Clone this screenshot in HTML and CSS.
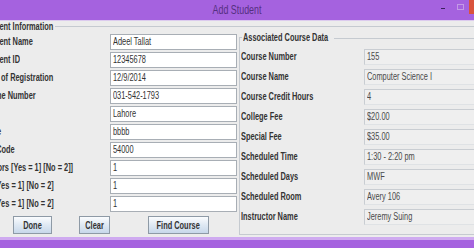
FILE: index.html
```html
<!DOCTYPE html>
<html>
<head>
<meta charset="utf-8">
<link rel="stylesheet" href="styles.css">
</head>
<body>
<div class="window">
  <div class="titlebar">
    <div class="spacer"></div>
    <div class="title"><span class="t">Add Student</span></div>
    <div class="controls"><span class="min"></span><span class="max"></span><span class="close"></span></div>
  </div>
  <div class="content">
    <div class="frame">
      <div class="outer-head"><span class="legend"><span class="t">Student Information</span></span><span class="rule"></span></div>
      <div class="body">
        <div class="left">
          <div class="form">
            <span class="lbl"><span class="t">Student Name</span></span><span class="field"><span class="t">Adeel Tallat</span></span>
            <span class="lbl"><span class="t">Student ID</span></span><span class="field"><span class="t">12345678</span></span>
            <span class="lbl"><span class="t">Date of Registration</span></span><span class="field"><span class="t">12/9/2014</span></span>
            <span class="lbl"><span class="t">Phone Number</span></span><span class="field"><span class="t">031-542-1793</span></span>
            <span class="lbl"><span class="t">City</span></span><span class="field"><span class="t">Lahore</span></span>
            <span class="lbl"><span class="t">State</span></span><span class="field"><span class="t">bbbb</span></span>
            <span class="lbl"><span class="t">Zip Code</span></span><span class="field"><span class="t">54000</span></span>
            <span class="lbl"><span class="t">Honors [Yes = 1] [No = 2]]</span></span><span class="field"><span class="t">1</span></span>
            <span class="lbl"><span class="t">FT [Yes = 1] [No = 2]</span></span><span class="field"><span class="t">1</span></span>
            <span class="lbl"><span class="t">FT [Yes = 1] [No = 2]</span></span><span class="field"><span class="t">1</span></span>
          </div>
          <div class="buttons">
            <button class="btn btn-done"><span class="t">Done</span></button>
            <button class="btn btn-clear"><span class="t">Clear</span></button>
            <button class="btn btn-find"><span class="t">Find Course</span></button>
          </div>
        </div>
        <div class="right">
          <div class="rp-head"><span class="cap"></span><span class="legend"><span class="t">Associated Course Data</span></span><span class="rule"></span></div>
          <div class="rp-body">
            <span class="lbl"><span class="t">Course Number</span></span><span class="rfield"><span class="t">155</span></span>
            <span class="lbl"><span class="t">Course Name</span></span><span class="rfield"><span class="t">Computer Science I</span></span>
            <span class="lbl"><span class="t">Course Credit Hours</span></span><span class="rfield"><span class="t">4</span></span>
            <span class="lbl"><span class="t">College Fee</span></span><span class="rfield"><span class="t">$20.00</span></span>
            <span class="lbl"><span class="t">Special Fee</span></span><span class="rfield"><span class="t">$35.00</span></span>
            <span class="lbl"><span class="t">Scheduled Time</span></span><span class="rfield"><span class="t">1:30 - 2:20 pm</span></span>
            <span class="lbl"><span class="t">Scheduled Days</span></span><span class="rfield"><span class="t">MWF</span></span>
            <span class="lbl"><span class="t">Scheduled Room</span></span><span class="rfield"><span class="t">Avery 106</span></span>
            <span class="lbl"><span class="t">Instructor Name</span></span><span class="rfield"><span class="t">Jeremy Suing</span></span>
          </div>
        </div>
      </div>
    </div>
  </div>
  <div class="bottombar"></div>
</div>
</body>
</html>
```
FILE: styles.css
```css
html, body {
  margin: 0;
  padding: 0;
  background: #ececec;
}
body {
  width: 474px;
  height: 248px;
  overflow: hidden;
  font-family: "Liberation Sans", Arial, sans-serif;
  font-size: 10px;
  color: #333;
}
.t {
  display: inline-block;
  white-space: nowrap;
  transform: scaleX(0.74);
  transform-origin: left center;
}
.window {
  width: 474px;
  height: 248px;
  display: flex;
  flex-direction: column;
  overflow: hidden;
}
.titlebar {
  height: 20px;
  flex: 0 0 20px;
  background: #a562df;
  border-bottom: 1px solid #dccbee;
  display: grid;
  grid-template-columns: 1fr auto 1fr;
  align-items: center;
}
.title {
  font-size: 12px;
  color: #55307f;
  line-height: 20px;
  text-align: center;
}
.title .t {
  transform-origin: center center;
}
.controls {
  display: flex;
  justify-content: flex-end;
  align-self: stretch;
}
.min {
  width: 4px;
  height: 1px;
  background: #3c2060;
  margin: 8px 12px 0 0;
}
.max {
  width: 5px;
  height: 4px;
  border: 1px solid #c49ae6;
  margin: 4px 5px 0 0;
}
.close {
  width: 5px;
  height: 14px;
  background: #d9533c;
}
.content {
  flex: 1 1 auto;
  overflow: hidden;
  background: #ececec;
}
.frame {
  margin-left: -17px;
  width: 640px;
}
.outer-head {
  height: 13px;
  display: flex;
  align-items: flex-start;
}
.legend {
  font-weight: bold;
  line-height: 11px;
  white-space: nowrap;
}
.outer-head .legend {
  width: 72px;
  flex: 0 0 72px;
}
.rule {
  flex: 1;
  height: 0;
  border-top: 1px solid #c5cad0;
  margin-top: 5px;
}
.body {
  display: grid;
  grid-template-columns: 254px 1fr;
  column-gap: 2px;
  align-items: start;
}
.form {
  display: grid;
  grid-template-columns: 127px 127px;
  grid-auto-rows: 16px;
  row-gap: 2px;
  align-items: center;
}
.lbl {
  font-weight: bold;
  white-space: nowrap;
  line-height: 12px;
}
.field {
  height: 16px;
  box-sizing: border-box;
  background: #fff;
  border: 1px solid #a8aeb5;
  padding-left: 2px;
  line-height: 14px;
  color: #333;
  overflow: hidden;
}
.buttons {
  display: flex;
  padding: 4px 0 0 30px;
}
.btn {
  height: 18px;
  box-sizing: border-box;
  padding: 0;
  font-family: inherit;
  font-size: 10px;
  font-weight: bold;
  color: #333;
  border: 1px solid #8e9aa6;
  border-radius: 0;
  background: linear-gradient(#fbfcfe, #e1eaf4 45%, #c7d8ea);
  overflow: hidden;
}
.btn .t {
  transform-origin: center center;
}
.btn-done { width: 39px; }
.btn-clear { width: 31px; margin-left: 27px; }
.btn-find { width: 61px; margin-left: 38px; }
.right {
  margin-top: -1px;
}
.rp-head {
  height: 10px;
  display: flex;
  align-items: center;
}
.rp-head .legend {
  line-height: 10px;
  width: 91px;
  flex: 0 0 91px;
  padding-left: 1px;
}
.rp-head .rule {
  margin-top: 0;
  align-self: center;
}
.cap {
  align-self: flex-end;
  width: 2px;
  height: 5px;
  border-top: 1px solid #c5cad0;
  border-left: 1px solid #c5cad0;
}
.rp-body {
  border-left: 1px solid #c5cad0;
  border-bottom: 1px solid #c5cad0;
  padding: 6px 0 9px 1px;
  display: grid;
  grid-template-columns: 123px 1fr;
  grid-auto-rows: 16px;
  row-gap: 4px;
  align-items: center;
}
.rfield {
  height: 16px;
  box-sizing: border-box;
  background: #efefef;
  border: 1px solid #c9cdd2;
  border-bottom-color: #dfe2e5;
  padding-left: 2px;
  line-height: 14px;
  color: #4a4a4a;
  overflow: hidden;
}
.bottombar {
  flex: 0 0 11px;
  height: 11px;
  background: #a562df;
  border-top: 3px solid #cfaaf0;
  box-sizing: border-box;
}
```
